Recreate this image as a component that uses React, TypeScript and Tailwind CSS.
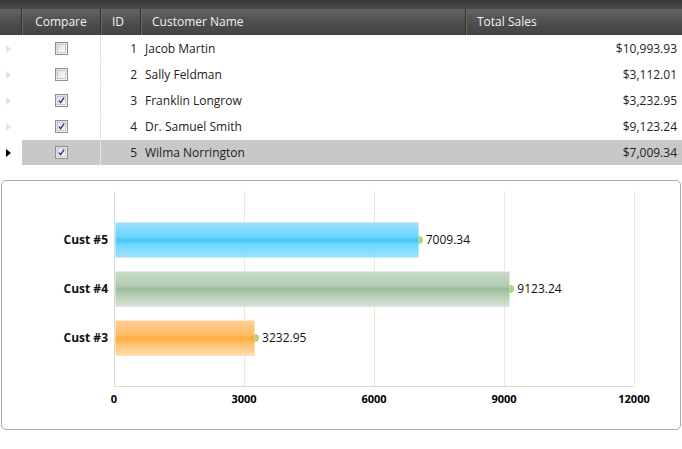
import React from "react";

interface Customer {
  id: number;
  name: string;
  sales: number;
  compare: boolean;
}

const customers: Customer[] = [
  { id: 1, name: "Jacob Martin", sales: 10993.93, compare: false },
  { id: 2, name: "Sally Feldman", sales: 3112.01, compare: false },
  { id: 3, name: "Franklin Longrow", sales: 3232.95, compare: true },
  { id: 4, name: "Dr. Samuel Smith", sales: 9123.24, compare: true },
  { id: 5, name: "Wilma Norrington", sales: 7009.34, compare: true },
];

const barStyles: Record<number, string> = {
  5: "bg-[linear-gradient(180deg,#92dcff_0%,#5fd0ff_40%,#2ec3fb_50%,#62d2ff_65%,#93e0ff_100%)]",
  4: "bg-[linear-gradient(180deg,#c3d8c3_0%,#a9c7a9_40%,#93b693_50%,#afcbaf_70%,#cfe0cf_100%)]",
  3: "bg-[linear-gradient(180deg,#ffca86_0%,#ffb758_40%,#ffa42c_50%,#ffbd66_70%,#ffd69f_100%)]",
};

const MAX = 12000;
const PLOT_W = 520;
const ticks = [0, 3000, 6000, 9000, 12000];
const font = { fontFamily: '"Open Sans", "Noto Sans", sans-serif' };

function money(n: number) {
  return "$" + n.toLocaleString("en-US", { minimumFractionDigits: 2, maximumFractionDigits: 2 });
}

function CheckBox({ checked }: { checked: boolean }) {
  return (
    <div className="w-[13px] h-[13px] border border-[#8f8f8f] bg-[linear-gradient(135deg,#dcdcdc,#f7f7f7)] p-[1px]">
      <div className="w-full h-full border border-[#c9c9c9] bg-[linear-gradient(135deg,#e2e2e2,#fbfbfb)] flex items-center justify-center">
        {checked && (
          <svg width="9" height="9" viewBox="0 0 9 9">
            <path d="M1.2 4.6 L3.4 7.2 L7.8 0.8" stroke="#2b2f8f" strokeWidth="1.8" fill="none" />
          </svg>
        )}
      </div>
    </div>
  );
}

function GridRow({ c, selected }: { c: Customer; selected: boolean }) {
  const cell = selected ? "bg-[#c8c8c8]" : "bg-white";
  return (
    <div className="grid grid-cols-[22px_79px_40px_325px_1fr] h-[26px] text-[12px] text-[#222] pt-px">
      <div className="flex items-center pl-[6px] bg-white">
        <div
          className={
            "w-0 h-0 border-y-[4px] border-y-transparent border-l-[5px] " +
            (selected ? "border-l-black" : "border-l-[#e2e2e2]")
          }
        />
      </div>
      <div className={"flex items-center justify-center border-r border-[#e4e4e4] " + cell}>
        <CheckBox checked={c.compare} />
      </div>
      <div className={"flex items-center justify-end pr-[4px] " + cell}>{c.id}</div>
      <div className={"flex items-center pl-[4px] " + cell}>{c.name}</div>
      <div className={"flex items-center justify-end pr-[5px] " + cell}>{money(c.sales)}</div>
    </div>
  );
}

function HeaderCell({ label, center, last }: { label: string; center?: boolean; last?: boolean }) {
  return (
    <div
      className={
        "flex items-center text-[12px] text-[#f2f2f2] " +
        (center ? "justify-center " : "pl-[11px] ") +
        (last ? "" : "border-r border-r-[#2f2f2f] shadow-[1px_0_0_#6c6c6c]")
      }
    >
      {label}
    </div>
  );
}

function SalesChart() {
  const rows = customers.filter((c) => c.compare).slice().reverse();
  return (
    <div className="mx-[1px] mt-[15px] h-[250px] border border-[#a9a9a9] rounded-[5px] pt-[10px]">
      <div className="flex">
        <div className="w-[112px] flex flex-col justify-center gap-[13px] pr-[6px]">
          {rows.map((c) => (
            <div key={c.id} className="h-[36px] flex items-center justify-end text-[12px] font-bold text-[#111]">
              Cust #{c.id}
            </div>
          ))}
        </div>
        <div className="relative w-[520px] h-[196px] border-l border-b border-[#dcdcd6]">
          {ticks.slice(1).map((t) => (
            <div
              key={t}
              className="absolute top-0 bottom-0 w-px bg-[#ece8dd]"
              style={{ left: (t / MAX) * PLOT_W - 1 }}
            />
          ))}
          <div className="relative h-full flex flex-col justify-center gap-[13px]">
            {rows.map((c) => {
              const w = (c.sales / MAX) * PLOT_W;
              return (
                <div key={c.id} className="h-[36px] flex items-center">
                  <div
                    className={"h-full rounded-[2px] opacity-90 border border-white/40 " + barStyles[c.id]}
                    style={{ width: w }}
                  />
                  <div className="w-[8px] h-[8px] rounded-full bg-[#a9d77a] -ml-[4px]" />
                  <span className="ml-[3px] text-[12px] text-[#111]">{c.sales.toFixed(2)}</span>
                </div>
              );
            })}
          </div>
        </div>
      </div>
      <div className="relative ml-[112px] h-[20px] mt-[4px]">
        {ticks.map((t) => (
          <span
            key={t}
            className="absolute -translate-x-1/2 text-[11px] font-bold text-black"
            style={{ left: (t / MAX) * PLOT_W }}
          >
            {t}
          </span>
        ))}
      </div>
    </div>
  );
}

export default function App() {
  return (
    <div className="w-[682px] h-[449px] bg-white overflow-hidden" style={font}>
      <div className="h-[9px] bg-[linear-gradient(180deg,#363636,#4a4a4a)]" />
      <div className="grid grid-cols-[22px_79px_40px_325px_1fr] h-[26px] bg-[linear-gradient(180deg,#646464,#4f4f4f_50%,#434343)]">
        <HeaderCell label="" />
        <HeaderCell label="Compare" center />
        <HeaderCell label="ID" />
        <HeaderCell label="Customer Name" />
        <HeaderCell label="Total Sales" last />
      </div>
      {customers.map((c) => (
        <GridRow key={c.id} c={c} selected={c.id === 5} />
      ))}
      <SalesChart />
    </div>
  );
}
